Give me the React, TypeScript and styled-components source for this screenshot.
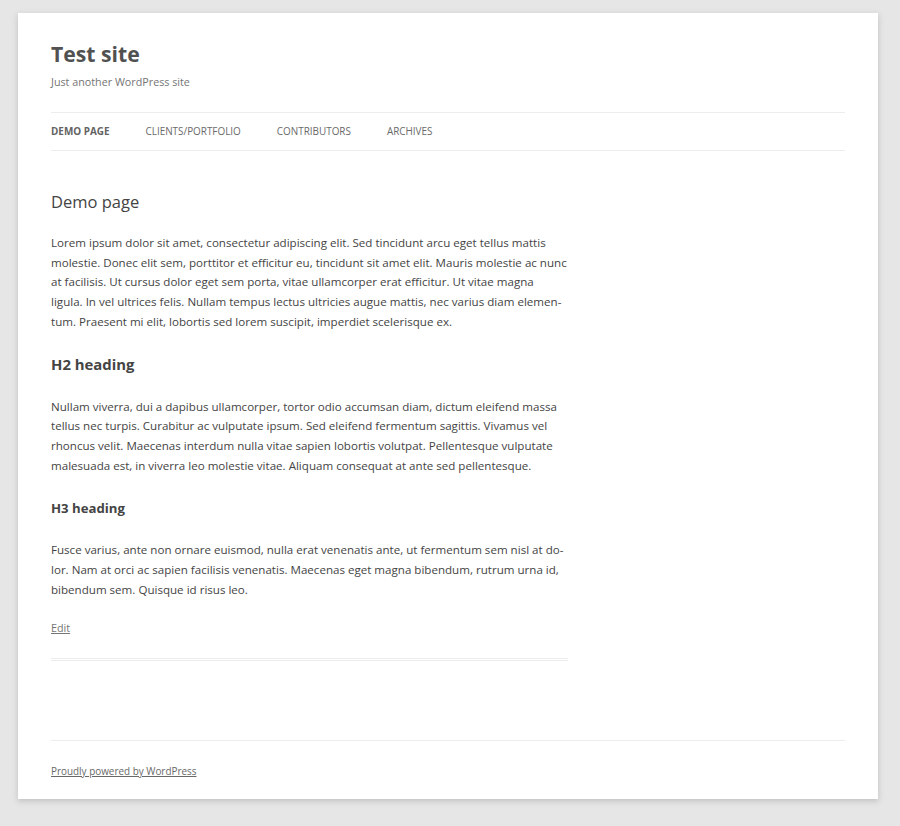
import styled, { createGlobalStyle } from "styled-components";

const GlobalStyle = createGlobalStyle`
  body {
    margin: 0;
    background-color: #e6e6e6;
    font-family: "Open Sans", "Liberation Sans", sans-serif;
    color: #444;
  }
`;

const Site = styled.div`
  width: 794px;
  margin: 13px 22px 26px 18px;
  padding: 0 33px;
  background-color: #fff;
  box-shadow: 0 2px 6px rgba(100, 100, 100, 0.3);
`;

const Header = styled.header`
  padding: 23px 0 20px;
`;

const SiteTitle = styled.h1`
  margin: 0;
  font-size: 21.2px;
  line-height: 36.6px;
  font-weight: 700;

  a {
    color: #515151;
    text-decoration: none;
  }
`;

const Description = styled.h2`
  margin: 0;
  font-size: 10.75px;
  line-height: 19.85px;
  font-weight: normal;
  color: #757575;
`;

const Nav = styled.nav`
  margin-top: 19.85px;
`;

const Menu = styled.ul`
  display: flex;
  margin: 0;
  padding: 0;
  list-style: none;
  border-top: 1px solid #ededed;
  border-bottom: 1px solid #ededed;
`;

const MenuItem = styled.li<{ $current?: boolean }>`
  margin-right: 36px;
  font-size: 9.92px;
  line-height: 36.6px;
  text-transform: uppercase;

  a {
    color: ${(props) => (props.$current ? "#636363" : "#6a6a6a")};
    font-weight: ${(props) => (props.$current ? 700 : 400)};
    text-decoration: none;
  }
`;

const Main = styled.main`
  display: flow-root;
`;

const Article = styled.article`
  width: 517px;
  margin: 21px 0 59.5px;
  padding-bottom: 18.5px;
  border-bottom: 3px double #ededed;
`;

const EntryTitle = styled.h1`
  margin: 0 0 21px;
  font-size: 16.5px;
  line-height: 19.85px;
  font-weight: normal;
`;

const Content = styled.div`
  font-size: 11.58px;
  line-height: 19.85px;

  p {
    margin: 0 0 19.85px;
  }

  h2 {
    margin: 21px 0 19.85px;
    font-size: 14.9px;
    line-height: 23.8px;
    font-weight: 700;
  }

  h3 {
    margin: 19.85px 0;
    font-size: 13.2px;
    line-height: 24.4px;
    font-weight: 700;
  }
`;

const EntryMeta = styled.footer`
  margin-top: 19.85px;
  font-size: 10.75px;
  line-height: 19.85px;

  a {
    color: #757575;
  }
`;

const Footer = styled.footer`
  margin-top: 19.85px;
  padding: 20.5px 0 18px;
  border-top: 1px solid #ededed;
  font-size: 9.92px;
  line-height: 19.85px;

  a {
    color: #686868;
  }
`;

const menu = [
  { label: "Demo page", current: true },
  { label: "Clients/Portfolio" },
  { label: "Contributors" },
  { label: "Archives" },
];

export default function App() {
  return (
    <>
      <GlobalStyle />
      <Site>
        <Header>
          <SiteTitle>
            <a href="#">Test site</a>
          </SiteTitle>
          <Description>Just another WordPress site</Description>
          <Nav>
            <Menu>
              {menu.map((item) => (
                <MenuItem key={item.label} $current={item.current}>
                  <a href="#">{item.label}</a>
                </MenuItem>
              ))}
            </Menu>
          </Nav>
        </Header>
        <Main>
          <Article>
            <EntryTitle>Demo page</EntryTitle>
            <Content>
              <p>
                Lorem ipsum dolor sit amet, consectetur adipiscing elit. Sed
                tincidunt arcu eget tellus mattis molestie. Donec elit sem,
                porttitor et efficitur eu, tincidunt sit amet elit. Mauris
                molestie ac nunc at facilisis. Ut cursus dolor eget sem porta,
                vitae ullamcorper erat efficitur. Ut vitae magna ligula. In vel
                ultrices felis. Nullam tempus lectus ultricies augue mattis, nec
                varius diam elemen&shy;tum. Praesent mi elit, lobortis sed lorem
                suscipit, imperdiet scelerisque ex.
              </p>
              <h2>H2 heading</h2>
              <p>
                Nullam viverra, dui a dapibus ullamcorper, tortor odio accumsan
                diam, dictum eleifend massa tellus nec turpis. Curabitur ac
                vulputate ipsum. Sed eleifend fermentum sagittis. Vivamus vel
                rhoncus velit. Maecenas interdum nulla vitae sapien lobortis
                volutpat. Pellentesque vulputate malesuada est, in viverra leo
                molestie vitae. Aliquam consequat at ante sed pellentesque.
              </p>
              <h3>H3 heading</h3>
              <p>
                Fusce varius, ante non ornare euismod, nulla erat venenatis
                ante, ut fermentum sem nisl at do&shy;lor. Nam at orci ac sapien
                facilisis venenatis. Maecenas eget magna bibendum, rutrum urna
                id, bibendum sem. Quisque id risus leo.
              </p>
            </Content>
            <EntryMeta>
              <a href="#">Edit</a>
            </EntryMeta>
          </Article>
        </Main>
        <Footer>
          <a href="#">Proudly powered by WordPress</a>
        </Footer>
      </Site>
    </>
  );
}
